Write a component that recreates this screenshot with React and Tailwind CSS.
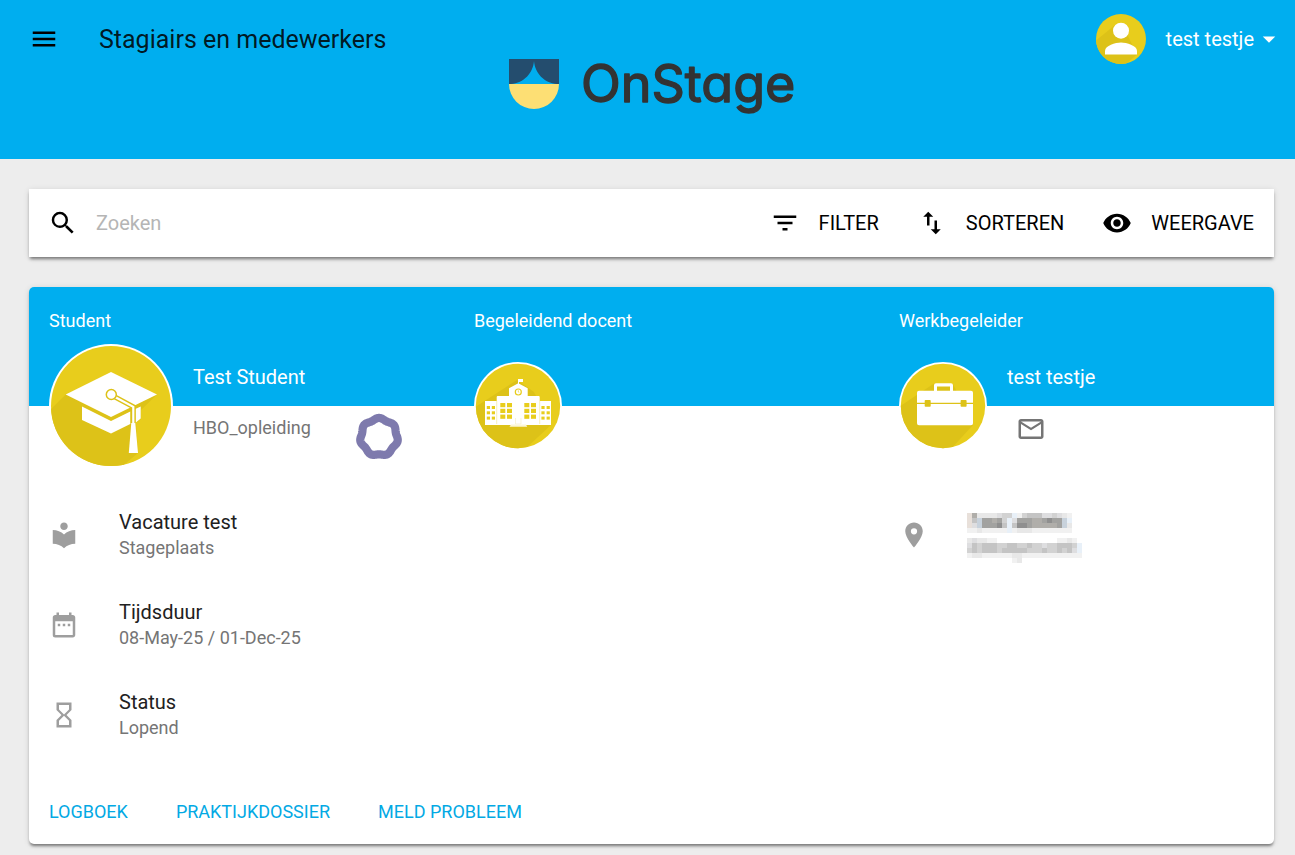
import React from "react";
import {
  MdMenu,
  MdSearch,
  MdFilterList,
  MdImportExport,
  MdVisibility,
  MdMailOutline,
  MdLocalLibrary,
  MdDateRange,
  MdHourglassEmpty,
  MdPlace,
  MdArrowDropDown,
} from "react-icons/md";

const GOLD = "#e8cd1c";
const SHADE = "#ddc218";

function Disc({ id, size, ring, shadow, className, children }) {
  const c = size / 2;
  return (
    <svg viewBox={`0 0 ${size} ${size}`} className={className} aria-hidden="true">
      <defs>
        <clipPath id={id}>
          <circle cx={c} cy={c} r={c - ring} />
        </clipPath>
      </defs>
      {ring > 0 && <circle cx={c} cy={c} r={c} fill="#fff" />}
      <g clipPath={`url(#${id})`}>
        <rect width={size} height={size} fill={GOLD} />
        <path d={shadow} fill={SHADE} />
      </g>
      {children}
    </svg>
  );
}

function UserAvatar() {
  return (
    <Disc id="user" size={50} ring={0} className="size-[50px] shrink-0" shadow="M19 11L-2 28V50H30L41 40.500L30 18z">
      <circle cx="25" cy="16.700" r="8" fill="#fff" />
      <path d="M9 40.500V37c0-5.500 10.500-8.500 16-8.500s16 3 16 8.500v3.500z" fill="#fff" />
    </Disc>
  );
}

function StudentAvatar() {
  return (
    <Disc
      id="student"
      size={124}
      ring={2}
      className="size-[124px] shrink-0"
      shadow="M16.700 50.500H108L92 66V75L87 79L89 109L70 125H0V67z"
    >
      <path d="M62 28l46 22.500L62 73 16.700 50.500z" fill="#fff" />
      <path d="M33 62.500L62 77l19.300-9.500V80L62 89.500 33 76zM86.300 65l5.400-2.500v12L86.300 79z" fill="#fff" />
      <path d="M66 53l18.300 9.800V79" fill="none" stroke={SHADE} strokeWidth="5" />
      <path d="M66 53l18.300 9.800V80" fill="none" stroke="#fff" strokeWidth="2.200" />
      <circle cx="62.300" cy="50.500" r="5" fill="#fff" stroke={SHADE} strokeWidth="1.500" />
      <path d="M82.300 79h4L89 109h-9.200z" fill="#fff" />
    </Disc>
  );
}

function SchoolAvatar() {
  const rowsMain = [41, 46.8, 52.6];
  const rowsWing = [44, 49.3, 54.6];
  return (
    <Disc id="school" size={88} ring={1.8} className="size-[88px] shrink-0" shadow="M43 18L0 46V88H50L77 63L60 30z">
      <path d="M44 17h5v3h-4v3h-1z" fill="#fff" />
      <path
        d="M35 26.300l9.300-5 9.400 5V34h11a1 1 0 0 1 1 1v4H77v24H11V39h11.700v-4a1 1 0 0 1 1-1H35z"
        fill="#fff"
      />
      <path d="M22.700 39v23M65.700 39v23" stroke="#f3e68c" strokeWidth=".6" />
      {rowsMain.map((y) =>
        [26.3, 33, 50.3, 57].map((x) => <rect key={`${x}-${y}`} x={x} y={y} width="5" height="4.200" fill={GOLD} />)
      )}
      {rowsWing.map((y) =>
        [12.8, 17.8, 67.4, 72.6].map((x) => (
          <rect key={`${x}-${y}`} x={x} y={y} width="3.200" height="3" fill={GOLD} />
        ))
      )}
      <circle cx="44.300" cy="30" r="3" fill="#fff" stroke={GOLD} strokeWidth="1.200" />
      <path d="M44.300 28.200V30l1 .6" fill="none" stroke={GOLD} strokeWidth=".6" />
      <path d="M41.500 56v6h5.500v-6" fill="none" stroke="#f3ecc0" strokeWidth=".6" />
      <path d="M37 62.500h15l1.200 2.300H35.500z" fill="#fbf6d6" />
    </Disc>
  );
}

function BriefcaseAvatar() {
  return (
    <Disc
      id="briefcase"
      size={88}
      ring={1.8}
      className="size-[88px] shrink-0"
      shadow="M35 21.500L0 45V88H51L74 63L54 22z"
    >
      <path
        d="M37 21.300h15a2 2 0 0 1 2 2v5.400h18a2 2 0 0 1 2 2v30.600a2 2 0 0 1-2 2H20a2 2 0 0 1-2-2V30.700a2 2 0 0 1 2-2h15v-5.400a2 2 0 0 1 2-2zM38 24.500v4.200h13v-4.200z"
        fill="#fff"
        fillRule="evenodd"
      />
      <path d="M18 41.400h56" stroke={SHADE} strokeWidth="1.200" />
      <rect x="25.700" y="38" width="6" height="6.800" rx=".8" fill={SHADE} />
      <rect x="61.600" y="38" width="6" height="6.800" rx=".8" fill={SHADE} />
    </Disc>
  );
}

const ringPath =
  Array.from({ length: 120 }, (_, i) => {
    const a = (i / 120) * Math.PI * 2;
    const r = 18.2 + 0.9 * Math.cos(7 * a);
    return `${i ? "L" : "M"}${(24 + r * Math.sin(a)).toFixed(2)} ${(24 - r * Math.cos(a)).toFixed(2)}`;
  }).join("") + "z";

function Logo() {
  return (
    <svg viewBox="0 -10 296 80" className="h-[80px] w-[296px]" role="img" aria-label="OnStage">
      <path d="M0 0H25V2C24 14 15 24 2 25H0zM50 0H25V2C26 14 35 24 48 25H50z" fill="#244d6e" />
      <path d="M0 25H50a25 25 0 0 1-50 0z" fill="#fddf74" />
      <text
        x="72"
        y="43"
        fontSize="52"
        fontWeight="400"
        fill="#333"
        stroke="#333"
        strokeWidth="1.400"
        strokeLinejoin="round"
        className="font-['Inter',sans-serif] [font-feature-settings:'cv11'] [font-optical-sizing:none]"
      >
        OnStage
      </text>
    </svg>
  );
}

/* Obscured company name and town as 5px cells; each letter is a tone. */
const tones = {
  a: "#8f8f8f",
  b: "#a2a2a0",
  c: "#b0aeaa",
  d: "#c4c4c4",
  e: "#d2d2d2",
  f: "#dedee0",
  g: "#e8e8e8",
  h: "#f1f1f1",
  p: "#e8f0f8",
  q: "#c8d2dc",
  r: "#e8e0da",
  ".": "#ffffff",
};

const mosaic = [
  "rcggggfeephedddffefgh..",
  "rdqbbcbepfbbbccbabbqp..",
  "rfqbbbadpdaabcccccbqg..",
  "hhghhhhhphggghhhhhhhh..",
  ".......................",
  "gfgghh............hhgh.",
  "fdedddeeddeedeefeedddep",
  "ededddedddddeeedeededfp",
  "hgghhhhhhgghhhhhhhhhhhh",
  ".........hg............",
];

function ObscuredCompany() {
  return (
    <svg
      viewBox="0 -6 115 56"
      className="h-[56px] w-[115px]"
      role="img"
      aria-label="Company"
      shapeRendering="crispEdges"
    >
      {mosaic.flatMap((row, r) =>
        [...row].map((v, c) => (
          <rect key={`${r}-${c}`} x={c * 5} y={r * 5} width="5" height="5" fill={tones[v]} />
        ))
      )}
    </svg>
  );
}

function ToolButton({ icon: Icon, children }) {
  return (
    <button type="button" className="flex items-center gap-[19px] text-xl">
      <Icon className="size-[30px]" />
      {children}
    </button>
  );
}

function Person({ label, avatar, name, sub, extra }) {
  return (
    <section>
      <h2 className="text-lg leading-7 text-white">{label}</h2>
      <div className="mt-[10px] flex h-[124px] items-center gap-5">
        <div className="pb-[2px]">{avatar}</div>
        {name && (
          <div className="flex flex-col gap-[25px] pb-[7px]">
            <h3 className="text-xl leading-6 text-white">{name}</h3>
            <div className="h-7 text-lg leading-7 text-[#757575]">{sub}</div>
          </div>
        )}
        {extra}
      </div>
    </section>
  );
}

function Info({ icon: Icon, title, text }) {
  return (
    <li className="flex h-[90px] items-center gap-10">
      <Icon className="size-[30px] shrink-0" />
      <div>
        <p className="text-xl leading-[26px] text-[#212121]">{title}</p>
        <p className="text-lg leading-[26px] text-[#757575]">{text}</p>
      </div>
    </li>
  );
}

const cardShadow = "shadow-[0_3px_3px_-1px_rgba(0,0,0,0.45),0_1px_6px_rgba(0,0,0,0.12)]";

export default function App() {
  return (
    <div className="min-h-screen bg-[#ededed] font-['Roboto',sans-serif] text-black">
      <header className="grid min-h-[159px] grid-cols-[1fr_auto_1fr] items-start bg-[#00aeef] pr-[11px] pl-[29px]">
        <div className="flex h-[78px] items-center gap-10">
          <button type="button" aria-label="Menu">
            <MdMenu className="size-[30px]" />
          </button>
          <h1 className="text-[25px] leading-[33px] whitespace-nowrap text-black/87">Stagiairs en medewerkers</h1>
        </div>
        <div className="pt-[49px]">
          <Logo />
        </div>
        <button type="button" className="flex h-[78px] items-center justify-self-end text-xl text-white">
          <UserAvatar />
          <span className="pl-5">test testje</span>
          <MdArrowDropDown className="size-[30px]" />
        </button>
      </header>

      <main className="flex flex-col gap-[30px] pt-[30px] pr-[21px] pb-[11px] pl-[29px]">
        <div className={`flex h-[68px] items-center bg-white pr-5 pl-[19px] ${cardShadow}`}>
          <label htmlFor="search" aria-label="Zoeken">
            <MdSearch className="size-[30px]" />
          </label>
          <input
            id="search"
            type="text"
            placeholder="Zoeken"
            className="ml-[18px] min-w-0 flex-1 text-xl outline-none placeholder:text-[#b5b5b5]"
          />
          <div className="flex gap-[38px]">
            <ToolButton icon={MdFilterList}>FILTER</ToolButton>
            <ToolButton icon={MdImportExport}>SORTEREN</ToolButton>
            <ToolButton icon={MdVisibility}>WEERGAVE</ToolButton>
          </div>
        </div>

        <article className={`overflow-hidden rounded-[5px] bg-white ${cardShadow}`}>
          <div className="grid grid-cols-3 gap-x-[50px] bg-[linear-gradient(#00aeef_119px,#ffffff_119px)] pt-5 pl-5">
            <Person
              label="Student"
              avatar={<StudentAvatar />}
              name="Test Student"
              sub="HBO_opleiding"
              extra={
                <svg viewBox="0 0 48 48" className="mb-2 ml-6 size-12 self-end" aria-hidden="true">
                  <path d={ringPath} fill="none" stroke="#7e7aad" strokeWidth="8.200" strokeLinejoin="round" />
                </svg>
              }
            />
            <Person label="Begeleidend docent" avatar={<SchoolAvatar />} />
            <Person
              label="Werkbegeleider"
              avatar={<BriefcaseAvatar />}
              name="test testje"
              sub={
                <a href="#mail" aria-label="E-mail" className="ml-[9px] inline-block">
                  <MdMailOutline className="size-[30px]" />
                </a>
              }
            />
          </div>

          <div className="grid grid-cols-3 gap-x-[50px] pt-[21px] pl-5 text-[#9e9e9e]">
            <ul>
              <Info icon={MdLocalLibrary} title="Vacature test" text="Stageplaats" />
              <Info icon={MdDateRange} title="Tijdsduur" text="08-May-25 / 01-Dec-25" />
              <Info icon={MdHourglassEmpty} title="Status" text="Lopend" />
            </ul>
            <div className="col-start-3 flex h-[90px] items-center gap-[38px]">
              <MdPlace className="size-[30px]" />
              <ObscuredCompany />
            </div>
          </div>

          <nav className="flex gap-12 px-5 pt-[37px] pb-[17px] text-lg leading-[30px] text-[#03a9e4]">
            <a href="#logboek">LOGBOEK</a>
            <a href="#praktijkdossier">PRAKTIJKDOSSIER</a>
            <a href="#probleem">MELD PROBLEEM</a>
          </nav>
        </article>
      </main>
    </div>
  );
}
